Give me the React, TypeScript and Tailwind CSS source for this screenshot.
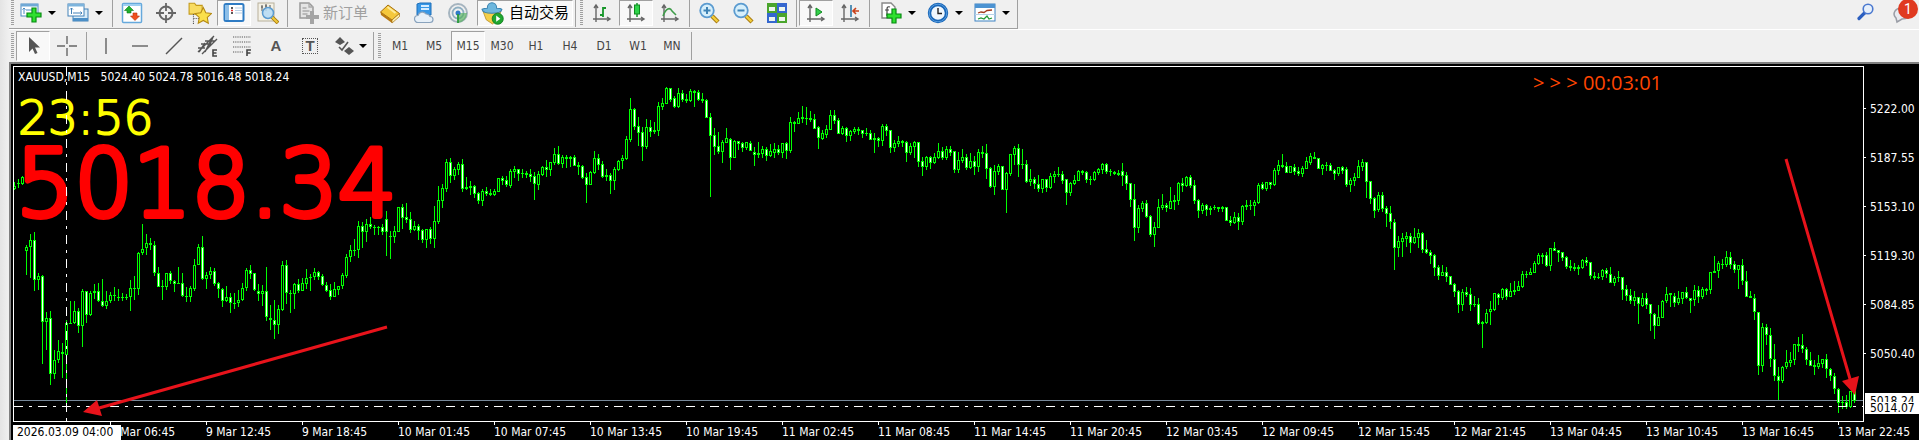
import React from "react";

/* Each candle: high, body top, body bottom, low and direction (u = hollow, d = filled). */
const CANDLES = `
182 186 189 190u|179 183 184 188u|176 177 184 185u|245 247 251 275u|234 240 247 278u|232 240 280 291d|273 276 280 290u|275 276 322 364d
312 318 322 350u|311 318 374 385d|350 360 374 379u|340 351 360 363u|343 352 354 378d|320 323 355 403u|301 323 324 324u|301 311 323 324u
308 311 326 333d|289 291 326 347u|291 291 315 323d|291 293 315 316u|284 291 293 299u|283 291 301 302d|279 301 306 307d|291 301 306 309u
292 295 301 303u|287 295 296 301d|289 297 298 301d|293 297 298 301u|294 297 298 300u|280 288 297 311u|276 288 289 300d|252 253 289 295u
224 249 253 255u|234 243 248 255u|238 243 245 250d|241 245 273 276d|267 273 287 287d|280 286 287 300u|273 273 287 290u|271 273 281 284d
280 281 284 292d|267 283 284 284u|273 283 296 297d|287 296 297 302d|286 288 297 302u|259 265 289 291u|244 247 265 265u|236 247 279 280d
272 275 279 289u|267 271 275 279u|268 271 284 286d|282 283 289 298d|288 289 301 307d|286 297 301 302u|293 297 303 313d|293 303 304 309u
290 300 303 307u|283 288 300 301u|268 270 288 291u|265 270 274 279d|273 273 290 291d|284 291 294 301d|285 291 294 306u|267 291 317 321d
305 318 320 330d|300 320 325 339d|305 309 325 334u|261 265 310 311u|260 265 293 304d|290 293 294 313d|283 284 294 309u|279 284 291 293d
278 283 291 291u|269 278 284 289u|274 277 278 291d|268 272 277 280u|271 272 277 280d|274 276 285 286d|282 285 291 292d|284 290 297 300d
282 289 297 297u|286 286 290 295u|273 275 286 289u|254 257 276 278u|245 250 257 262u|239 250 251 256u|221 226 250 258u|222 226 232 248d
219 224 232 242u|217 224 227 229d|225 227 228 235d|226 227 228 235u|224 227 232 235d|211 219 232 256d|231 236 237 259d|226 231 237 243u
207 207 232 232u|204 207 218 229d|203 217 220 223d|212 219 230 233d|221 226 230 231u|224 226 231 240d|229 230 240 243d|229 229 240 248u
227 229 239 244d|206 221 239 248u|186 200 222 224u|184 188 201 208u|159 162 189 192u|158 162 176 183d|167 169 176 180u|162 164 170 175u
159 164 189 192d|177 187 189 190u|181 186 188 195d|185 186 194 198d|192 193 201 204d|189 191 201 206u|187 191 194 196d|189 193 195 196d
189 191 195 196u|178 178 192 192u|176 178 181 185d|176 180 185 187d|169 171 186 188u|166 169 172 178u|169 169 174 181d|169 173 174 178u
171 173 175 178d|169 174 177 182d|172 176 184 200d|171 174 185 190u|166 167 175 176u|160 167 170 177d|162 162 170 176u|148 154 163 165u
146 154 164 165d|155 157 164 168u|155 157 159 168d|156 157 159 167u|155 157 166 166d|162 165 167 175d|165 166 178 179d|173 177 185 203d
171 172 185 185u|151 158 173 174u|154 158 165 170d|161 164 177 178d|169 175 177 181d|173 175 181 194d|167 169 181 190u|160 161 170 171u
155 158 161 169u|136 139 159 160u|98 109 140 142u|108 109 127 130d|117 126 133 146d|127 132 147 161d|119 127 147 149u|120 127 132 137d
122 130 132 134d|102 106 131 136u|98 103 107 110u|87 88 104 104u|88 88 100 102d|96 98 107 108d|88 93 107 108u|90 93 100 102d
94 99 101 103d|89 91 101 102u|90 91 93 107d|90 92 100 101d|93 99 101 103d|99 100 118 118d|113 117 136 197d|128 135 147 155d
132 146 152 154d|140 142 152 163u|128 138 143 143u|138 139 158 170d|140 141 158 158u|141 141 144 150d|142 143 148 152d|142 142 148 150u
141 143 151 151d|147 152 155 166d|142 153 155 158d|146 149 154 158u|147 149 156 161d|144 151 156 157u|143 149 153 158u|145 149 153 155d
143 143 153 158u|142 143 151 159d|117 122 151 153u|121 122 124 132d|112 118 124 124u|106 117 119 123d|107 118 119 125d|111 118 120 122d
114 119 129 129d|126 127 138 149d|130 133 139 140u|125 129 135 138u|110 115 130 130u|110 115 121 124d|118 120 134 134d|126 128 134 135u
127 128 136 142d|130 131 136 141u|127 129 132 134u|127 129 131 135d|130 130 134 138d|128 133 134 136u|130 133 140 140d|133 138 140 153d
137 138 141 147d|124 126 141 146u|124 126 131 136d|130 130 148 153d|140 143 148 152u|136 141 144 147u|140 141 143 147d|141 142 153 162d
143 146 153 155u|141 142 147 158u|142 142 162 167d|157 161 167 176d|156 157 167 170u|156 157 163 169d|153 157 163 164u|143 151 158 159u
147 151 158 160d|146 149 158 160u|146 149 153 156d|151 151 170 173d|152 160 170 173u|149 157 161 163u|154 157 168 170d|153 161 168 169u
156 161 167 175d|149 152 167 172u|146 152 154 158d|144 153 169 179d|167 168 187 188d|165 171 187 195u|164 166 172 175u|166 166 190 190d
172 173 190 213u|154 154 174 176u|146 148 155 165u|144 148 165 177d|149 164 165 169u|160 164 182 183d|169 179 182 186u|177 179 184 189d
175 184 189 192d|179 179 189 193u|179 179 188 192d|173 176 188 189u|171 174 177 183u|167 174 175 177u|171 174 181 184d|179 179 193 205d
182 183 193 196u|175 180 184 185u|170 171 181 181u|170 171 173 175d|171 172 180 183d|176 179 180 185u|171 172 180 181u|168 169 173 175u
163 164 170 174u|163 164 172 174d|169 171 172 176u|171 172 174 175d|170 173 175 176d|163 171 176 186d|172 175 184 190d|183 183 200 207d
184 199 228 241d|205 208 228 233u|201 203 209 212u|200 203 217 218d|215 216 235 237d|222 227 235 247u|199 207 228 228u|194 205 208 210u
203 205 208 212d|187 201 209 209u|195 200 202 210d|182 183 201 205u|178 183 186 192d|176 177 186 187u|175 177 186 188d
180 185 201 204d|199 200 211 218d|203 205 211 214u|204 205 210 216d|206 208 210 215d|205 207 208 210u|207 207 209 212d|206 207 209 212d
207 207 221 221d|216 220 223 226d|212 217 223 224u|213 217 222 230d|205 206 222 225u|200 205 207 210d|200 205 206 210u|200 202 206 216u
183 185 203 204u|182 184 189 190d|182 182 189 191u|182 182 185 189d|168 170 185 186u|160 165 171 175u|154 165 167 168d|162 166 173 173d
166 166 173 173u|164 167 172 175d|167 171 174 176d|166 168 174 177u|157 161 169 169u|153 156 163 165u|152 157 159 159d|158 158 169 169d
164 165 169 175u|162 165 166 171u|163 165 171 171d|169 170 174 180d|167 167 174 176u|166 167 171 174d|167 169 185 187d|178 180 185 192u
173 177 181 186u|160 166 178 178u|159 162 167 171u|162 162 182 198d|181 181 199 204d|197 198 211 218d|192 195 210 212u|192 195 209 212d
206 208 214 227d|206 213 222 229d|219 222 248 270d|236 241 248 257u|233 238 242 257u|232 236 239 247u|233 236 243 253d|228 237 243 244u
229 233 238 248u|232 233 250 253d|240 249 253 254d|250 252 256 264d|254 255 268 276d|265 267 276 280d|265 272 276 276u|267 272 277 282d
276 276 285 285d|283 284 292 297d|290 291 305 313d|289 292 305 311u|287 292 295 297d|288 294 305 311d|296 304 305 307u|298 304 324 325d
321 322 324 348d|309 313 323 324u|301 309 312 325u|293 293 310 311u|293 294 298 305d|288 289 298 300u|288 289 297 300d|283 291 297 297u
281 290 292 295u|281 286 291 291u|271 274 287 288u|271 274 275 278u|268 272 275 275u|261 263 273 273u|253 255 264 265u|253 255 257 264d
252 255 266 267d|248 248 266 271u|242 248 251 251d|250 250 253 262d|252 252 258 261d|256 257 267 269d|260 266 268 271d|263 267 269 271d
265 267 269 275u|259 260 268 269u|257 260 263 266d|262 262 276 279d|272 276 278 280d|273 277 278 279u|269 270 277 280u|268 270 274 278d
267 274 283 283d|276 278 283 286u|271 277 278 282u|277 277 290 300d|285 289 296 301d|289 295 301 304d|291 297 301 306u|297 297 304 324d
293 298 306 307u|293 298 305 309d|304 304 314 331d|313 314 326 339d|305 317 326 326u|300 301 318 318u|287 294 301 303u|293 293 295 307d
293 296 303 307d|291 298 303 305u|292 292 299 304u|287 292 298 299d|298 298 301 313d|285 290 300 306u|286 290 297 303d|287 289 297 299u
288 289 291 295d|272 272 290 294u|256 271 273 273u|261 263 271 278u|259 264 265 269d|251 257 265 267u|252 257 265 269d|261 264 270 273d
265 265 270 289u|259 265 281 285d|271 281 297 297d|291 296 298 298d|294 298 312 320d|312 312 366 375d|323 327 366 372u|324 327 335 345d
328 335 359 367d|344 359 376 381d|367 376 381 400d|366 367 381 383u|350 362 367 369u|352 360 363 367u|344 344 360 365u|337 344 346 352d
334 345 349 353d|347 349 360 365d|352 360 366 366d|360 365 367 375d|355 363 367 369u|359 359 364 368u|354 359 369 378d|368 369 376 381d
373 376 389 394d|388 389 403 413d|396 402 403 409u|395 402 407 409d|391 391 407 408u|378 391 401 403d`
  .trim()
  .split(/[|\n]/)
  .map((row, i) => {
    const [high, top, bottom, low] = row.slice(0, -1).split(" ").map(Number);
    return { x: 14 + i * 4, high, top, bottom: Math.max(bottom, top + 1), low, up: row.endsWith("u") };
  });

const TIMES = [
  "9 Mar 06:45", "9 Mar 12:45", "9 Mar 18:45",
  "10 Mar 01:45", "10 Mar 07:45", "10 Mar 13:45", "10 Mar 19:45",
  "11 Mar 02:45", "11 Mar 08:45", "11 Mar 14:45", "11 Mar 20:45",
  "12 Mar 03:45", "12 Mar 09:45", "12 Mar 15:45", "12 Mar 21:45",
  "13 Mar 04:45", "13 Mar 10:45", "13 Mar 16:45", "13 Mar 22:45",
];

const PRICES = ["5222.00", "5187.55", "5153.10", "5119.30", "5084.85", "5050.40"];
const PERIODS = ["M1", "M5", "M15", "M30", "H1", "H4", "D1", "W1", "MN"];

const CHART_FONT = "font-['DejaVu_Sans_Condensed','DejaVu_Sans',sans-serif]";

function Icon({ children, size = 22 }: { children: React.ReactNode; size?: number }) {
  return (
    <svg width={size} height={size} viewBox="0 0 22 22" fill="none" aria-hidden="true" className="shrink-0">
      {children}
    </svg>
  );
}

function Tool({ label, pressed, children }: { label: string; pressed?: boolean; children: React.ReactNode }) {
  return (
    <button
      type="button"
      aria-label={label}
      aria-pressed={pressed}
      className={
        pressed
          ? "flex h-full w-[34px] items-center justify-center border border-[#a0a0a0] border-r-white border-b-white bg-[#f8f8f8]"
          : "flex h-full w-[34px] items-center justify-center"
      }
    >
      {children}
    </button>
  );
}

function Menu({ label, compact, children }: { label: string; compact?: boolean; children: React.ReactNode }) {
  return (
    <button
      type="button"
      aria-label={label}
      className={compact ? "flex h-full w-11 items-center gap-1 pl-[6px]" : "flex h-full w-[47px] items-center gap-[6px] pl-1"}
    >
      {children}
      <svg width="8" height="4" viewBox="0 0 8 4" aria-hidden="true" className="shrink-0">
        <path d="M0 0h8L4 4z" fill="#000" />
      </svg>
    </button>
  );
}

const Sep = () => <span className="mx-[2px] h-[28px] w-px shrink-0 bg-[#a0a0a0]" />;
const Grip = () => (
  <span className="mx-[2px] h-[26px] w-[3px] shrink-0 bg-[repeating-linear-gradient(to_bottom,#a0a0a0_0_1px,#f0f0f0_1px_2px)]" />
);

const Axes = () => (
  <g stroke="#666" strokeWidth="1.4">
    <path d="M5 3v17M2 17h17M3 6l2-3 2 3M16 15l3 2-3 2" />
  </g>
);

const Plus = ({ x, y }: { x: number; y: number }) => (
  <path
    transform={`translate(${x} ${y})`}
    d="M5 0h4v5h5v4H9v5H5V9H0V5h5z"
    fill="#2fe02f"
    stroke="#078a12"
    strokeWidth="1.2"
  />
);

const Lens = ({ minus }: { minus?: boolean }) => (
  <g>
    <path d="M14 14l6 6" stroke="#a97c10" strokeWidth="4.4" />
    <path d="M14 14l5.5 5.5" stroke="#f4cf3c" strokeWidth="2.4" />
    <circle cx="9" cy="8.500" r="6.800" fill="#d6effb" stroke="#5b9bd0" strokeWidth="1.800" />
    <path d={minus ? "M5.500 8.500h7" : "M5.500 8.500h7M9 5v7"} stroke="#3f83b5" strokeWidth="2" />
  </g>
);

function TopToolbar() {
  return (
    <div className="flex">
      <div className="flex h-[29px] items-start border-r border-b border-[#a0a0a0]">
        <Grip />
        <div className="flex h-[26px] items-center">
          <Menu label="New chart">
            <Icon>
              <rect x="1" y="2" width="17" height="12" fill="#fff" stroke="#4a8cc4" />
              <path d="M1 2h17v2.500H1z" fill="#6fa9d6" />
              <path d="M4 6v6M2.500 7.500L4 6l1.500 1.500M6 8h6" stroke="#4a8cc4" />
              <Plus x={7} y={6} />
            </Icon>
          </Menu>
          <Menu label="Profiles">
            <Icon>
              <rect x="6" y="7" width="15" height="12" fill="#d8ecf9" stroke="#4381b8" />
              <path d="M6 16h15v3H6z" fill="#4c8fc7" />
              <rect x="1" y="2" width="16" height="12" fill="#fff" stroke="#4381b8" />
              <path d="M1 2h16v2.500H1z" fill="#7db4dd" />
              <path d="M4.500 6v6M3 7.500L4.500 6 6 7.500M6 11h9M13.500 9.500L15 11l-1.500 1.500" stroke="#4381b8" />
            </Icon>
          </Menu>
          <Sep />
          <Tool label="Market watch">
            <Icon>
              <rect x="1.500" y="1.500" width="19" height="19" rx="1" fill="#fff" stroke="#66a9dc" strokeWidth="1.500" />
              <path d="M2 3h18" stroke="#9fd0f2" strokeWidth="2" />
              <path d="M8 4l4.500 4.500H10V11H6V8.500H3.500z" fill="#20b030" stroke="#0a7d18" strokeWidth=".6" />
              <path d="M14 18.500l-4.500-4.500H12v-3h4v3h2.500z" fill="#f1501d" stroke="#b9320a" strokeWidth=".6" />
            </Icon>
          </Tool>
          <Tool label="Data window">
            <Icon>
              <circle cx="11" cy="11" r="6.500" stroke="#666" strokeWidth="2" />
              <path d="M11 1v8M11 13v8M1 11h8M13 11h8" stroke="#666" strokeWidth="1.800" />
            </Icon>
          </Tool>
          <Tool label="Navigator">
            <Icon size={24}>
              <path d="M1 2h5l1.500 2H13v8H1z" fill="#f8dc62" stroke="#c49a1c" />
              <path d="M5 12v9M5 16h5" stroke="#555" strokeDasharray="1 1" />
              <path d="M14 6l2.300 4.700 5.200.8-3.800 3.600.9 5.200-4.600-2.500-4.600 2.500.9-5.200L6.500 11.500l5.200-.8z" fill="#fbe04a" stroke="#b58a12" />
            </Icon>
          </Tool>
          <Tool label="Terminal" pressed>
            <Icon>
              <rect x="1.500" y="2" width="19" height="17" rx="1.500" fill="#fff" stroke="#2f7cc4" strokeWidth="2" />
              <path d="M2 3h4v15H2z" fill="#8dbfe8" />
              <path d="M8 6h2M8 11h2" stroke="#222" strokeWidth="1.500" />
              <path d="M8 8.500h2" stroke="#e03030" strokeWidth="1.500" />
              <path d="M12 6h7M12 8.500h7M12 11h7" stroke="#b9cfe4" />
            </Icon>
          </Tool>
          <Tool label="Strategy tester">
            <Icon>
              <rect x="1" y="1" width="16" height="18" fill="#f4f1e6" stroke="#b7b09a" />
              <path d="M5 3v6M9 2v7M13 3v5M4 5h2M8 4h2" stroke="#555" />
              <path d="M15 15l6 6" stroke="#a97c10" strokeWidth="3.800" />
              <path d="M15 15l5.500 5.500" stroke="#f0ca3a" strokeWidth="2" />
              <circle cx="11" cy="11" r="5.500" fill="#b4dbf5" fillOpacity=".85" stroke="#5b9bd0" strokeWidth="1.500" />
            </Icon>
          </Tool>
          <Sep />
          <button
            type="button"
            disabled
            className="flex h-full w-[83px] items-center gap-[3px] pl-2 font-['Liberation_Sans','Noto_Sans_CJK_SC',sans-serif] text-[15px] whitespace-nowrap text-[#a0a0a0]"
          >
            <Icon>
              <path d="M2 1h9l4 4v11H2z" fill="#e4e4e4" stroke="#999" strokeWidth="1.500" />
              <path d="M11 1v4h4M4.500 6h4M4.500 9h7M4.500 12h5" stroke="#aaa" strokeWidth="1.300" />
              <path d="M12 9h4v4h5v4h-5v5h-4v-5H8v-4h4z" fill="#a4a4a4" />
            </Icon>
            新订单
          </button>
          <Tool label="MetaEditor">
            <Icon>
              <path d="M1.500 10L9 3l11.500 8.500L13 18z" fill="#f5c83c" stroke="#a66f0c" />
              <path d="M1.500 10L13 18v3L2 13z" fill="#b87a12" />
              <path d="M13 18l7.500-6.500v3L13 21z" fill="#fff3b0" stroke="#a66f0c" strokeWidth=".7" />
              <path d="M8.500 5l8 6" stroke="#fdeb9a" strokeWidth="2" />
            </Icon>
          </Tool>
          <Tool label="Virtual hosting">
            <Icon>
              <path d="M4 2l3-1h11v12H4z" fill="#3797e6" stroke="#1f6fb8" />
              <path d="M8 4h8M8 7h8" stroke="#d4ecff" strokeWidth="1.800" />
              <path d="M5 20.500a3.500 3.500 0 010-7 4.500 4.500 0 018-1.500 4 4 0 014 2.500 3 3 0 010 6z" fill="#e7f0f8" stroke="#8aa3bd" strokeWidth="1.200" />
            </Icon>
          </Tool>
          <Tool label="Signals">
            <Icon>
              <circle cx="11" cy="11" r="9" stroke="#a5b4bf" strokeWidth="2" />
              <circle cx="11" cy="11" r="5.500" stroke="#8eafc2" strokeWidth="1.800" />
              <path d="M11 11v10a10 10 0 009-10z" fill="#53b05a" fillOpacity=".65" />
              <circle cx="11" cy="11" r="2.500" fill="#2f7ac8" />
              <path d="M11 12v9" stroke="#2a9a3a" strokeWidth="1.800" />
            </Icon>
          </Tool>
          <button
            type="button"
            aria-pressed="true"
            className="ml-[2px] flex h-full w-24 items-center gap-[5px] border border-[#a0a0a0] border-r-white border-b-white bg-[#f8f8f8] pl-[3px] font-['Liberation_Sans','Noto_Sans_CJK_SC',sans-serif] text-[15px] whitespace-nowrap text-black"
          >
            <Icon size={23}>
              <path d="M2 9h17l-3 8-5 4-6-4z" fill="#f4cf48" stroke="#b8912a" strokeWidth=".8" />
              <path d="M1 7c2-1 4-1 5-1 0-7 9-7 9 0 2 0 4 0 5 1-1 5-18 5-19 0z" fill="#6db7de" stroke="#3a83b0" />
              <circle cx="16" cy="16" r="5.300" fill="#20a830" stroke="#0c7a1a" strokeWidth=".8" />
              <path d="M14.500 13l4 3-4 3z" fill="#fff" />
            </Icon>
            自动交易
          </button>
          <Sep />
          <Grip />
          <Tool label="Bar chart">
            <Icon>
              <Axes />
              <path d="M12 5v10M12 6h3M9 13h3" stroke="#17962a" strokeWidth="1.800" />
            </Icon>
          </Tool>
          <Tool label="Candlesticks" pressed>
            <Icon>
              <Axes />
              <path d="M12 1v14" stroke="#17962a" strokeWidth="1.500" />
              <rect x="9.500" y="3" width="5" height="9" fill="#2fd44a" stroke="#0f8a20" />
            </Icon>
          </Tool>
          <Tool label="Line chart">
            <Icon>
              <Axes />
              <path d="M4 14c3-8 7-9 9-5l4 4" stroke="#3f9c4a" strokeWidth="1.600" />
            </Icon>
          </Tool>
          <Sep />
          <Tool label="Zoom in"><Icon><Lens /></Icon></Tool>
          <Tool label="Zoom out"><Icon><Lens minus /></Icon></Tool>
          <Tool label="Tile windows">
            <Icon>
              <path d="M1 1h10v10H1zM11 11h10v10H11z" fill="#4aa52c" />
              <path d="M11 1h10v10H11zM1 11h10v10H1z" fill="#3567cf" />
              <path d="M3 5h6v4H3zM13 5h6v4h-6zM3 15h6v4H3zM13 15h6v4h-6z" fill="#eef6ee" />
            </Icon>
          </Tool>
          <Sep />
          <Tool label="Auto scroll" pressed>
            <Icon>
              <Axes />
              <path d="M11 6l6 4-6 4z" fill="#32d04a" stroke="#128a22" />
            </Icon>
          </Tool>
          <Tool label="Chart shift">
            <Icon>
              <Axes />
              <path d="M12 3v12" stroke="#2f78a8" strokeWidth="1.600" />
              <path d="M20 9h-6M17 6l-3 3 3 3" stroke="#c8401a" strokeWidth="1.600" />
            </Icon>
          </Tool>
          <Sep />
          <div className="flex h-full pl-1">
            <Menu label="Indicators">
              <Icon>
                <path d="M2 1h9l4 4v11H2z" fill="#fff" stroke="#888" strokeWidth="1.400" />
                <path d="M10 5c-3-1-3 1-3 3v6M5 8h4" stroke="#444" strokeWidth="1.200" />
                <Plus x={7} y={7} />
              </Icon>
            </Menu>
            <Menu label="Periodicity">
              <Icon>
                <circle cx="11" cy="11" r="8.500" fill="#eef6fd" stroke="#1766b8" strokeWidth="3.400" />
                <circle cx="11" cy="11" r="8.800" stroke="#66a8e8" strokeWidth=".8" />
                <path d="M11 6v5.500h4" stroke="#222" strokeWidth="1.400" />
              </Icon>
            </Menu>
            <Menu label="Templates">
              <Icon>
                <rect x="1" y="2" width="20" height="17" fill="#fff" stroke="#3c82c2" />
                <path d="M1 2h20v4H1z" fill="#4c93d2" />
                <path d="M4 11l3-1 3 .5 3-2 5-.5" stroke="#a33a1d" strokeWidth="1.300" />
                <path d="M1 12.500h20" stroke="#b8d2e8" />
                <path d="M4 17l3-1 3 1 3-3 2 3 3-1" stroke="#1f9a34" strokeWidth="1.300" />
              </Icon>
            </Menu>
          </div>
        </div>
      </div>
      <div className="ml-auto flex h-[29px] items-start gap-4 pr-px">
        <button type="button" aria-label="Search" className="mt-[3px]">
          <svg width="18" height="18" viewBox="0 0 18 18" fill="none" aria-hidden="true">
            <path d="M7.500 10L2 15.500" stroke="#2c5fc0" strokeWidth="3.200" strokeLinecap="round" />
            <circle cx="11" cy="6" r="4.800" fill="#e7f0fb" stroke="#4a78cf" strokeWidth="1.600" />
          </svg>
        </button>
        <button type="button" aria-label="Notifications" className="relative h-6 w-[27px]">
          <svg width="27" height="24" viewBox="0 0 27 24" fill="none" aria-hidden="true">
            <path d="M6 22l-1-4a7 6 0 016-10c7 0 9 3 9 6s-4 5-9 5z" fill="#e9ebf0" stroke="#9a9da6" strokeWidth="1.500" />
          </svg>
          <span className="absolute -top-px right-0 flex size-5 items-center justify-center rounded-full bg-[#e03a20] font-['Roboto',sans-serif] text-sm text-white">
            1
          </span>
        </button>
      </div>
    </div>
  );
}

function DrawingToolbar() {
  return (
    <div className="flex h-[33px] items-center border-t border-white">
      <Grip />
      <div className="flex h-[30px] items-center">
        <Tool label="Cursor" pressed>
          <Icon>
            <path d="M7 2v15l3.500-3.500L13 19l2.500-1-2.500-5.500h5z" fill="#555" />
          </Icon>
        </Tool>
        <Tool label="Crosshair">
          <Icon>
            <path d="M11 1v8M11 13v8M1 11h8M13 11h8" stroke="#666" strokeWidth="1.400" />
          </Icon>
        </Tool>
        <Sep />
        <Tool label="Vertical line">
          <Icon><path d="M11 3v16" stroke="#555" strokeWidth="1.300" /></Icon>
        </Tool>
        <Tool label="Horizontal line">
          <Icon><path d="M3 11h16" stroke="#555" strokeWidth="1.300" /></Icon>
        </Tool>
        <Tool label="Trendline">
          <Icon><path d="M3 19L19 3" stroke="#555" strokeWidth="1.500" /></Icon>
        </Tool>
        <Tool label="Equidistant channel">
          <Icon>
            <path d="M1 17L17 1M5 19L20 4M1 13h7M4 9h8M8 6h10M2 17L8 8M8 17l6-12M12 12l4-10" stroke="#555" strokeWidth="1.400" />
            <path d="M20 15h-4v6h4M16 18h3.500" stroke="#444" strokeWidth="1.600" />
          </Icon>
        </Tool>
        <Tool label="Fibonacci retracement">
          <Icon>
            <path d="M2 2h18M2 7h18M2 12h18M2 17h11" stroke="#555" strokeWidth="1.200" strokeDasharray="1.200 1" />
            <path d="M20 15h-4v6M16 18h3.500" stroke="#444" strokeWidth="1.600" />
          </Icon>
        </Tool>
        <button type="button" aria-label="Text" className="h-full w-[34px] font-['Liberation_Sans',sans-serif] text-[15px] font-bold text-[#555]">
          A
        </button>
        <button type="button" aria-label="Text label" className="flex h-full w-[34px] items-center justify-center">
          <span className="flex size-4 items-center justify-center border border-dotted border-[#555] font-['Liberation_Sans',sans-serif] text-[15px] font-bold text-[#555]">
            T
          </span>
        </button>
        <Menu label="Arrows" compact>
          <Icon>
            <path d="M7 2l5 5-5 3-5-3zM16 20l-5-4 5-4 5 4z" fill="#555" />
            <path d="M6 12l3 3 6-8" stroke="#555" strokeWidth="1.600" />
          </Icon>
        </Menu>
        <Sep />
        <Grip />
        {PERIODS.map((p) => (
          <button
            key={p}
            type="button"
            aria-pressed={p === "M15"}
            className={
              p === "M15"
                ? `h-full w-[34px] border border-[#a0a0a0] border-r-white border-b-white bg-[#f8f8f8] text-xs text-[#444] ${CHART_FONT}`
                : `h-full w-[34px] text-xs text-[#444] ${CHART_FONT}`
            }
          >
            {p}
          </button>
        ))}
        <Sep />
      </div>
    </div>
  );
}

function Plot() {
  return (
    <svg width="1849" height="354" viewBox="14 67 1849 354" className="block max-w-none" role="img" aria-label="XAUUSD M15 candlestick chart">
      <g shapeRendering="crispEdges">
        <path d="M14 400.500H1863" stroke="#778899" />
        {CANDLES.map((c) => (
          <g key={c.x}>
            <rect x={c.x} y={c.high} width="1" height={Math.max(1, c.low - c.high)} fill="#0f0" />
            <rect x={c.x - 1} y={c.top} width="3" height={c.bottom - c.top} fill="#0f0" />
            {c.bottom - c.top > 2 && (
              <rect x={c.x} y={c.top + 1} width="1" height={c.bottom - c.top - 2} fill={c.up ? "#000" : "#fff"} />
            )}
          </g>
        ))}
        <path d="M14 406.500H1863" stroke="#fff" strokeDasharray="9 6 3 6" />
      </g>
      <g fontFamily="'DejaVu Sans Light','DejaVu Sans',sans-serif" fontWeight="200" strokeLinejoin="round">
        <text x="18" y="134" fontSize="47" fill="#ff0" stroke="#ff0" strokeWidth="2">23:56</text>
        <text x="16" y="216" fontSize="92" fill="#f00" stroke="#f00" strokeWidth="6">5018.34</text>
      </g>
      <path d="M66.500 67V421" stroke="#fff" strokeDasharray="9 6 3 6" shapeRendering="crispEdges" />
      <g stroke="#e8131b" fill="#e8131b">
        <path d="M387 327L99 408M1786 159L1850 379" strokeWidth="3" />
        <path d="M83 412l14-12 5 16zM1855 395l-13-14 17-5z" stroke="none" />
      </g>
    </svg>
  );
}

function Chart() {
  return (
    <div className={`flex flex-1 flex-col border-t-2 border-l-2 border-[#808080] bg-black pt-[2px] pl-[2px] text-xs text-white ${CHART_FONT}`}>
      <div className="flex">
        <div className="relative min-w-0 flex-1 overflow-hidden border border-white">
          <Plot />
          <p className="absolute top-[2px] left-1 whitespace-pre">XAUUSD,M15   5024.40 5024.78 5016.48 5018.24</p>
          <p className="absolute top-[2px] right-[201px] font-['Open_Sans',sans-serif] text-xl leading-7 text-[#ff4500]">
            &gt; &gt; &gt; 00:03:01
          </p>
        </div>
        <div className="relative w-[55px] pt-[18px]">
          {PRICES.map((p) => (
            <div key={p} className="flex h-[49px] items-center gap-1">
              <span className="h-px w-[2px] bg-white" />
              <span>{p}</span>
            </div>
          ))}
          <div className="absolute inset-x-0 bottom-[8px] ml-px bg-white text-black">
            <div className="h-[9px] overflow-hidden pl-[5px] leading-[16px]">5018.24</div>
            <div className="h-[12px] pl-[5px] leading-[12px]">5014.07</div>
          </div>
        </div>
      </div>
      <div className="relative h-[18px] overflow-hidden pl-[97px]">
        <div className="flex">
          {TIMES.map((t) => (
            <div key={t} className="w-24 shrink-0 whitespace-nowrap">
              <span className="block h-[3px] w-px bg-white" />
              <span className="block leading-[15px]">{t}</span>
            </div>
          ))}
        </div>
        <span className="absolute bottom-0 left-0 w-[108px] bg-white pl-1 leading-[15px] whitespace-nowrap text-black">2026.03.09 04:00</span>
      </div>
    </div>
  );
}

export default function App() {
  return (
    <div className="flex min-h-screen overflow-hidden bg-[#f0f0f0]">
      <div className="w-[9px] shrink-0 bg-linear-to-r from-[#e4e4e4] to-[#f0f0f0]" />
      <main className="flex min-w-0 flex-1 flex-col">
        <TopToolbar />
        <DrawingToolbar />
        <Chart />
      </main>
    </div>
  );
}
